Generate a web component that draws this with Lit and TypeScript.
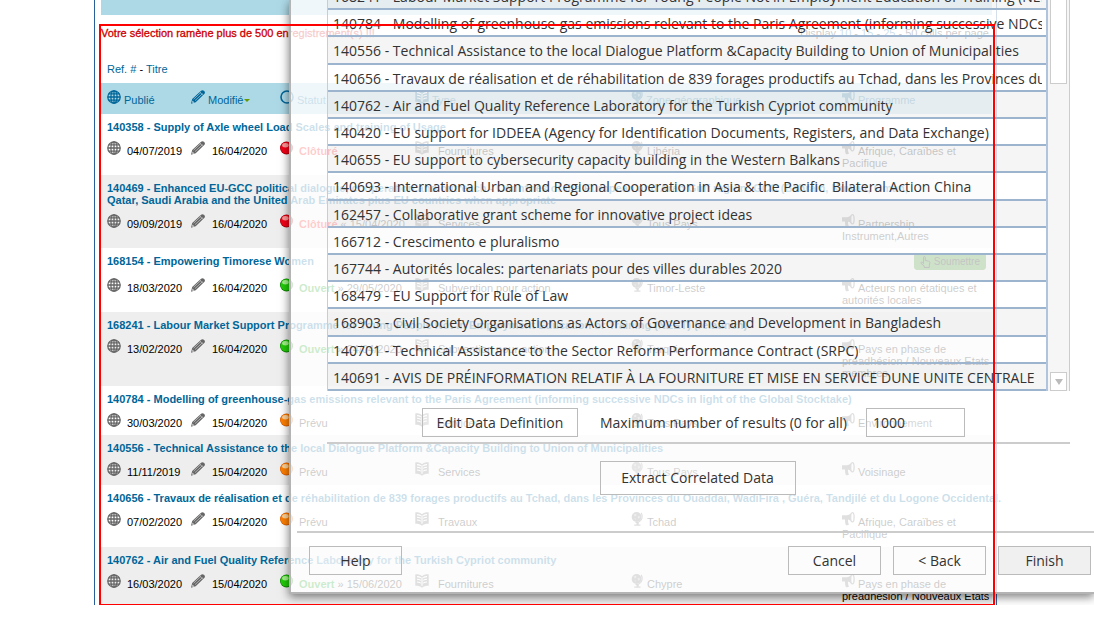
import { LitElement, html, css, svg, nothing } from "lit";
import { customElement } from "lit/decorators.js";
import { classMap } from "lit/directives/class-map.js";

interface Call {
  ref: string;
  title: string;
  published: string;
  modified: string;
  state: "closed" | "open" | "planned";
  until?: string;
  kind: string;
  zone: string;
  programme: string;
  submit?: boolean;
}

const CALLS: Call[] = [
  { ref: "140358", title: "Supply of Axle wheel Load Scales and training of Usage", published: "04/07/2019", modified: "16/04/2020", state: "closed", kind: "Fournitures", zone: "Libéria", programme: "Afrique, Caraïbes et Pacifique" },
  { ref: "140469", title: "Enhanced EU-GCC political dialogue, cooperation and outreach - Countries of the European and Arab Gulf region: GCC (Bahrain, Kuwait, Oman,\nQatar, Saudi Arabia and the United Arab Emirates plus EU countries when appropriate", published: "09/09/2019", modified: "16/04/2020", state: "closed", until: "« 15/04/2020", kind: "Services", zone: "Tous Pays", programme: "Partnership Instrument,Autres" },
  { ref: "168154", title: "Empowering Timorese Women", published: "18/03/2020", modified: "16/04/2020", state: "open", until: "» 29/05/2020", kind: "Subvention pour action", zone: "Timor-Leste", programme: "Acteurs non étatiques et autorités locales", submit: true },
  { ref: "168241", title: "Labour Market Support Programme for Young People Not in Employment Education or Training (NEET) (relaunch)", published: "13/02/2020", modified: "16/04/2020", state: "open", until: "» 24/04/2020", kind: "Subvention pour action", zone: "Turquie", programme: "Pays en phase de préadhésion / Nouveaux Etats membres" },
  { ref: "140784", title: "Modelling of greenhouse-gas emissions relevant to the Paris Agreement (informing successive NDCs in light of the Global Stocktake)", published: "30/03/2020", modified: "15/04/2020", state: "planned", kind: "Services", zone: "Tous Pays", programme: "Environnement" },
  { ref: "140556", title: "Technical Assistance to the local Dialogue Platform &Capacity Building to Union of Municipalities", published: "11/11/2019", modified: "15/04/2020", state: "planned", kind: "Services", zone: "Tous Pays", programme: "Voisinage" },
  { ref: "140656", title: "Travaux de réalisation et de réhabilitation de 839 forages productifs au Tchad, dans les Provinces du Ouaddaï, WadiFira , Guéra, Tandjilé et du Logone Occidental.", published: "07/02/2020", modified: "15/04/2020", state: "planned", kind: "Travaux", zone: "Tchad", programme: "Afrique, Caraïbes et Pacifique" },
  { ref: "140762", title: "Air and Fuel Quality Reference Laboratory for the Turkish Cypriot community", published: "16/03/2020", modified: "15/04/2020", state: "open", until: "» 15/06/2020", kind: "Fournitures", zone: "Chypre", programme: "Pays en phase de préadhésion / Nouveaux Etats membres" },
];

const RESULTS: string[] = [
  "168241 - Labour Market Support Programme for Young People Not in Employment Education or Training (NEETs)",
  "140784 - Modelling of greenhouse-gas emissions relevant to the Paris Agreement (informing successive NDCs in light",
  "140556 - Technical Assistance to the local Dialogue Platform &Capacity Building to Union of Municipalities",
  "140656 - Travaux de réalisation et de réhabilitation de 839 forages productifs au Tchad, dans les Provinces du Ouaddaï",
  "140762 - Air and Fuel Quality Reference Laboratory for the Turkish Cypriot community",
  "140420 - EU support for IDDEEA (Agency for Identification Documents, Registers, and Data Exchange)",
  "140655 - EU support to cybersecurity capacity building in the Western Balkans",
  "140693 - International Urban and Regional Cooperation in Asia & the Pacific  Bilateral Action China",
  "162457 - Collaborative grant scheme for innovative project ideas",
  "166712 - Crescimento e pluralismo",
  "167744 - Autorités locales: partenariats pour des villes durables 2020",
  "168479 - EU Support for Rule of Law",
  "168903 - Civil Society Organisations as Actors of Governance and Development in Bangladesh",
  "140701 - Technical Assistance to the Sector Reform Performance Contract (SRPC)",
  "140691 - AVIS DE PRÉINFORMATION RELATIF À LA FOURNITURE ET MISE EN SERVICE DUNE UNITE CENTRALE",
];

const STATE_LABEL = { closed: "Clôturé", open: "Ouvert", planned: "Prévu" };

const icon = (name: string, w: number, body: unknown) =>
  html`<svg class="icon ${name}" width=${w} height="14" viewBox="0 0 ${w} 14" aria-hidden="true">${body}</svg>`;

const globe = () => icon("globe", 14, svg`
  <g fill="none" stroke="currentColor" stroke-width="1.3">
    <circle cx="7" cy="7" r="6.2"/><ellipse cx="7" cy="7" rx="3.1" ry="6.2"/>
    <path d="M7 .8v12.4M.8 7h12.4M1.7 3.9h10.6M1.7 10.1h10.6"/>
  </g>`);

const pencil = () => icon("pencil", 14, svg`
  <path fill="currentColor" d="M0 13.800L1.200 9 9.800 1C10.700.1 11.900 0 12.900.8l.5.500C14.200 2.200 14.100 3.300 13.200 4.100L4.700 12.300z"/>
  <path stroke="#fff" stroke-opacity=".6" stroke-width=".8" fill="none" d="M2.600 9.200L10 2.300M4 10.600L11.600 3.600M9.200 2.400l2.800 2.900"/>
  <path fill="#fff" fill-opacity=".7" d="M1.500 10.400l1.900 2-1.700.5-.6-.7z"/>`);

const ring = () => icon("ring", 14, svg`<circle cx="7" cy="7" r="6" fill="none" stroke="currentColor" stroke-width="1.600"/>`);

const book = () => icon("book", 14, svg`
  <path fill="currentColor" d="M.3.4C3 .2 5.200.9 7 2.200 8.800.9 11 .2 13.700.4v11.400C11 11.700 8.800 12.300 7 13.800 5.200 12.300 3 11.700.3 11.800z"/>
  <path fill="none" stroke="#fff" stroke-width="1.100" d="M7 3.200v8.600M2 2.600c1.600 0 2.700.4 3.800 1.100M2 5.300c1.600 0 2.700.4 3.800 1.100M2 8c1.600 0 2.700.4 3.800 1.100M12 2.600c-1.600 0-2.700.4-3.800 1.100M12 5.300c-1.600 0-2.700.4-3.800 1.100M12 8c-1.600 0-2.700.4-3.800 1.100"/>`);

const place = () => icon("place", 12, svg`
  <circle cx="5.600" cy="5" r="4.900" fill="currentColor"/>
  <path fill="none" stroke="currentColor" stroke-width="1.100" d="M10.200.9c1.800 3 1.200 6.800-1.700 8.700-1.200.8-2.600 1-4 .8"/>
  <path fill="currentColor" d="M5.500 10h2.200v2.400h1.800v1.400H3.200v-1.400h2.300z"/>
  <path fill="#fff" fill-opacity=".45" d="M2.600 2.800l2-1 1 1.300-1.600 1.300zM6.600 4.600l1.800-.8.5 1.700-1.500 1.200zM3.400 6.200l1.400.3-.4 1.500z"/>`);

const horn = () => icon("horn", 13, svg`
  <path fill="currentColor" d="M0 3.200h4.800C6.400 3.100 7.600 2.500 9 1.200v8.200C7.600 8.200 6.800 7.700 6 7.500c-.1 2 .2 3.700 1 5.100-1 .9-2.600.9-3.300.1-.6-1.600-.8-3.300-.7-5.200H0z"/>
  <ellipse cx="10.400" cy="5.300" rx="1.700" ry="4.600" fill="none" stroke="currentColor" stroke-width="1.300"/>`);

const ball = (state: Call["state"]) => {
  const [light, mid, dark] = {
    closed: ["#ff9a9a", "#f40018", "#a8000c"],
    open: ["#a4f58a", "#22cc08", "#0b7d00"],
    planned: ["#ffd39a", "#ff8000", "#d85c00"],
  }[state];
  return icon("ball", 14, svg`
    <circle cx="6.500" cy="7" r="6.500" fill=${dark}/><circle cx="6.400" cy="6.800" r="5.800" fill=${mid}/>
    <ellipse cx="5.400" cy="4.200" rx="3.200" ry="2.200" fill=${light}/>`);
};

const hand = () => html`<svg width="11" height="12" viewBox="0 0 11 12" aria-hidden="true">
  <path fill="none" stroke="currentColor" d="M3.500 7.500V1.500c0-1.300 1.800-1.300 1.800 0v3l3.200.6c1 .2 1.500.8 1.400 1.700L9.300 9.300v2.200H4.200V10L1 7.300c-.6-.9.500-1.700 1.300-1z"/></svg>`;

@customElement("calls-table")
class CallsTable extends LitElement {
  static styles = css`
    :host { display: block; font: 11px/12px "Liberation Sans", Arial, sans-serif; color: #000; }
    a { color: #069; text-decoration: none; }
    .band { height: 15px; background: #add8e6; }
    .notice { display: flex; justify-content: space-between; padding-top: 12px; }
    .warn { color: #c00; -webkit-text-stroke: 0.3px #c00; }
    p { margin: 0; }
    .sort { padding: 24px 6px 8px; }
    table { width: 100%; table-layout: fixed; border-collapse: collapse; }
    .c-pub { width: 90px; }
    .c-mod { width: 89px; }
    .c-state { width: 135px; }
    .c-kind { width: 216px; }
    .c-zone { width: 211px; }
    th, td { padding: 0; text-align: left; vertical-align: top; font-weight: 400; }
    th:first-child, td:first-child { padding-left: 6px; }
    thead tr { background: #add8e6; }
    thead th { padding: 7px 0 8px; color: #069; }
    .alt { background: #eee; }
    .meta td { padding-top: 8px; padding-bottom: 6px; }
    .low .meta td { padding-bottom: 7px; }
    .heading { display: flex; justify-content: space-between; align-items: flex-start; padding: 5px 6px 0 0; }
    .title { font-weight: 700; padding-top: 2px; white-space: pre; }
    .icon { vertical-align: baseline; margin-right: 6px; overflow: visible; color: #666; }
    .pencil { margin-right: 7px; }
    thead .icon { color: #069; margin-right: 3px; }
    .ball { margin-right: 5px; }
    .book { margin-right: 9px; }
    .place { margin-right: 4px; }
    .horn { margin-right: 3px; }
    .caret { display: inline-block; border: 3px solid transparent; border-top-color: #690; border-bottom: 0; vertical-align: 2px; margin-left: 1px; }
    .closed { color: #f00; font-weight: 700; }
    .open { color: #090; font-weight: 700; }
    button { display: flex; align-items: center; gap: 3px; height: 17px; padding: 0 5px; font: 10px/12px "Liberation Sans", Arial, sans-serif; color: #000; background: #3a9a20; border: 1px solid #3a9a20; border-radius: 3px; }
  `;

  private row(c: Call, i: number) {
    return html`<tbody class=${classMap({ alt: i % 2 === 1, low: i === 3 || i > 4 })}>
      <tr><td colspan="6"><div class="heading">
        <a class="title" href="#${c.ref}">${c.ref} - ${c.title}</a>
        ${c.submit ? html`<button type="button">${hand()}Soumettre</button>` : nothing}
      </div></td></tr>
      <tr class="meta">
        <td>${globe()}${c.published}</td>
        <td>${pencil()}${c.modified}</td>
        <td>${ball(c.state)}<span class=${c.state}>${STATE_LABEL[c.state]}</span> ${c.until ?? nothing}</td>
        <td>${book()}${c.kind}</td>
        <td>${place()}${c.zone}</td>
        <td>${horn()}${c.programme}</td>
      </tr>
    </tbody>`;
  }

  render() {
    return html`
      <div class="band"></div>
      <div class="notice">
        <p class="warn">Votre sélection ramène plus de 500 enregistrement(s) !!!</p>
        <p>Display <a href="#10">10</a> - <a href="#15">15</a> - <a href="#25">25</a> - 50 calls per page.</p>
      </div>
      <p class="sort"><a href="#ref">Ref. #</a> - <a href="#titre">Titre</a></p>
      <table>
        <colgroup><col class="c-pub"><col class="c-mod"><col class="c-state"><col class="c-kind"><col class="c-zone"><col></colgroup>
        <thead><tr>
          <th scope="col">${globe()}Publié</th>
          <th scope="col">${pencil()}Modifié<span class="caret"></span></th>
          <th scope="col">${ring()}Statut</th>
          <th scope="col">${book()}Type</th>
          <th scope="col">${place()}Zone géographique</th>
          <th scope="col">${horn()}Programme</th>
        </tr></thead>
        ${CALLS.map((c, i) => this.row(c, i))}
      </table>`;
  }
}

@customElement("extract-dialog")
class ExtractDialog extends LitElement {
  static styles = css`
    :host { display: flex; flex-direction: column; box-sizing: border-box; font: 14px/20px "Open Sans", "Noto Sans", sans-serif; color: #333;
      background: rgba(255, 255, 255, 0.8); border: 2px solid #b4b4b4; border-top: 0; border-right: 0; box-shadow: 0 3px 9px rgba(0, 0, 0, 0.5); }
    .picker { display: flex; height: 391px; overflow: hidden; margin: 0 24px 0 36px; }
    ul { flex: 1; min-width: 0; display: grid; grid-template-columns: minmax(0, 1fr); grid-auto-rows: 1fr; height: 408px; margin: -17px 0 0; padding: 0; list-style: none; box-sizing: border-box;
      border-left: 1px solid #ccc; border-right: 2px solid #b0c4de; }
    li { display: flex; align-items: center; padding: 3px 4px 0 5px; border-bottom: 2px solid #9db4cf; }
    li:nth-child(odd) { background: rgba(0, 0, 0, 0.04); }
    .text { min-width: 0; overflow: hidden; white-space: pre; }
    .bar { width: 22px; box-sizing: border-box; display: flex; flex-direction: column; justify-content: space-between; padding: 0 2px; background: rgba(0, 0, 0, 0.035); border-right: 1px solid #ccc; }
    .thumb { height: 84px; box-sizing: border-box; background: #fff; border: 1px solid #ccc; border-top: 0; }
    .down { height: 19px; padding: 0; display: grid; place-items: center; background: #fff; border: 1px solid #ccc; }
    .tri { border: 4px solid transparent; border-top: 6px solid #bbb; border-bottom: 0; }
    .btn, input { box-sizing: border-box; height: 29px; font: inherit; color: inherit; background: rgba(255, 255, 255, 0.2); border: 1px solid #bbb; border-radius: 0; }
    .btn { width: 93px; padding: 0; text-align: center; }
    .options { display: flex; align-items: center; margin: 17px 24px 0 36px; padding: 0 0 5px 95px; border-bottom: 2px solid #ccc; }
    .options .btn { width: 156px; margin-right: 22px; }
    label { width: 266px; white-space: nowrap; }
    input { width: 99px; padding: 0 6px; }
    .run { display: flex; justify-content: center; padding-left: 10px; }
    .run .btn { width: 196px; height: 34px; margin-top: 17px; }
    .footer { display: flex; align-items: center; gap: 12px; margin: 36px 0 0 6px; padding: 13px 3px 0 12px; border-top: 2px solid #ccc; }
    .help { margin-right: auto; }
    .footer .primary { background: #f0f0f0; }
  `;

  render() {
    return html`
      <div class="picker">
        <ul>${RESULTS.map((r) => html`<li><span class="text">${r}</span></li>`)}</ul>
        <div class="bar">
          <div class="thumb"></div>
          <button class="down" type="button" aria-label="Scroll down"><span class="tri"></span></button>
        </div>
      </div>
      <div class="options">
        <button class="btn" type="button">Edit Data Definition</button>
        <label for="max">Maximum number of results (0 for all)</label>
        <input id="max" type="text" value="1000">
      </div>
      <div class="run"><button class="btn" type="button">Extract Correlated Data</button></div>
      <div class="footer">
        <button class="btn help" type="button">Help</button>
        <button class="btn" type="button">Cancel</button>
        <button class="btn" type="button">&lt; Back</button>
        <button class="btn primary" type="button">Finish</button>
      </div>`;
  }
}

@customElement("app-root")
class AppRoot extends LitElement {
  static styles = css`
    :host { display: block; box-sizing: border-box; height: 100vh; padding-bottom: 25px; background: #fff; overflow: hidden; }
    .stage { position: relative; height: 100%; overflow: hidden; }
    .page { height: 100%; margin: 0 97px 0 94px; padding: 0 4px 0 6px; box-sizing: border-box; border: solid #2a6099; border-width: 0 1px; }
    .dialog { position: absolute; inset: 0 0 11px 289px; }
    .frame { position: absolute; inset: 24px 99px 0 99px; border: 2px solid #f00; border-bottom-width: 1px; pointer-events: none; }
  `;

  render() {
    return html`<main class="stage">
      <div class="page"><calls-table></calls-table></div>
      <extract-dialog class="dialog" role="dialog" aria-label="Extract"></extract-dialog>
      <div class="frame"></div>
    </main>`;
  }
}
